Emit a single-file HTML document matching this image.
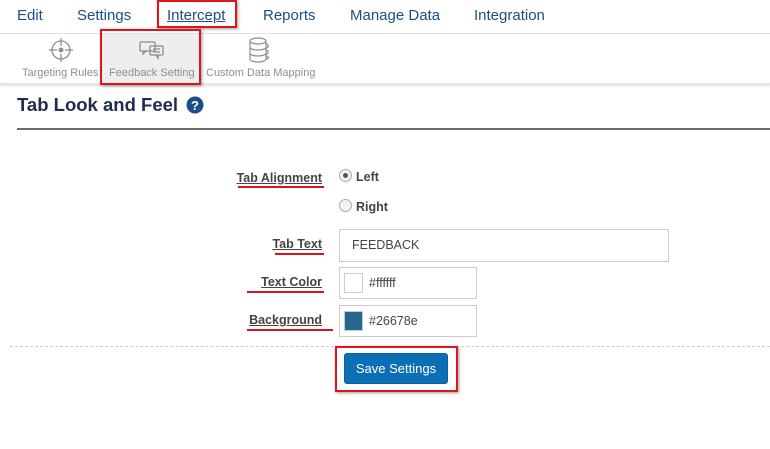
<!DOCTYPE html>
<html><head><style>
*{margin:0;padding:0;box-sizing:border-box}
body{width:770px;height:449px;background:#fff;font-family:"Liberation Sans",sans-serif;position:relative;overflow:hidden}
.a{position:absolute;white-space:nowrap}
.nav{font-size:15px;color:#1a4e86;top:7px}
.sub{font-size:11px;color:#8a8f96;top:67px}
.lbl{font-size:12.5px;font-weight:bold;color:#444;right:448px;text-align:right;text-decoration:underline}
.ru{position:absolute;height:2px;background:#d8141b}
.box{position:absolute;border:1px solid #ccc;background:#fff;font-size:12.5px;color:#444}
.red{position:absolute;border:2px solid #e0141b;box-shadow:1px 1px 3px rgba(0,0,0,.4)}
</style></head><body>
<div class="a nav" style="left:17px">Edit</div>
<div class="a nav" style="left:77px">Settings</div>
<div class="a nav" style="left:167px;text-decoration:underline">Intercept</div>
<div class="a nav" style="left:263px">Reports</div>
<div class="a nav" style="left:350px">Manage Data</div>
<div class="a nav" style="left:474px">Integration</div>
<div class="a" style="left:0;top:33px;width:770px;height:1px;background:#e2e2e2"></div>
<div class="a" style="left:101px;top:34px;width:99px;height:50px;background:#eeeeee"></div>
<div class="a" style="left:0;top:83px;width:770px;height:2px;background:#e4e4e4;box-shadow:0 1px 2px rgba(0,0,0,.15)"></div>
<svg class="a" style="left:47px;top:36px" width="28" height="28" viewBox="0 0 28 28" fill="none" stroke="#8a8f96" stroke-width="1.3"><circle cx="14" cy="14" r="9"/><path d="M14 2v8M14 18v8M2 14h8M18 14h8"/><circle cx="14" cy="14" r="1.8" fill="#8a8f96"/></svg>
<svg class="a" style="left:138px;top:39px" width="28" height="22" viewBox="0 0 28 22" fill="none" stroke="#8a8f96" stroke-width="1.3"><rect x="2" y="3" width="15" height="9" rx="1"/><path d="M5 12v3l3-3"/><rect x="12" y="7" width="13" height="9" rx="1"/><path d="M15 10h7M15 13h7M20 16v3l-2-3"/></svg>
<svg class="a" style="left:245px;top:36px" width="30" height="28" viewBox="0 0 30 28" fill="none" stroke="#8a8f96" stroke-width="1.2"><ellipse cx="13" cy="5" rx="8" ry="3"/><path d="M5 5v18c0 2 4 3 8 3s8-1 8-3V5M5 11c0 2 4 3 8 3s8-1 8-3M5 17c0 2 4 3 8 3s8-1 8-3"/><path d="M21 8c3 0 3 4 0 4M21 14c3 0 3 4 0 4M21 20c3 0 3 3 0 3"/></svg>
<div class="a sub" style="left:22px">Targeting Rules</div>
<div class="a sub" style="left:109px">Feedback Setting</div>
<div class="a sub" style="left:206px">Custom Data Mapping</div>
<div class="red" style="left:157px;top:0;width:80px;height:28px"></div>
<div class="red" style="left:100px;top:29px;width:101px;height:56px"></div>
<div class="a" style="left:17px;top:94px;font-size:18.5px;font-weight:bold;color:#1d2d4f">Tab Look and Feel</div>
<svg class="a" style="left:186px;top:96px" width="18" height="18"><circle cx="9" cy="9" r="8.5" fill="#1b4f8a"/><text x="9" y="14" fill="#fff" font-size="13" font-weight="bold" text-anchor="middle" font-family="Liberation Sans">?</text></svg>
<div class="a" style="left:17px;top:128px;width:753px;height:2px;background:#6b6b6b"></div>
<div class="a lbl" style="top:171px">Tab Alignment</div>
<div class="ru" style="left:238px;top:186px;width:86px"></div>
<div class="a lbl" style="top:237px">Tab Text</div>
<div class="ru" style="left:275px;top:253px;width:49px"></div>
<div class="a lbl" style="top:275px">Text Color</div>
<div class="ru" style="left:247px;top:291px;width:77px"></div>
<div class="a lbl" style="top:313px">Background</div>
<div class="ru" style="left:247px;top:329px;width:86px"></div>
<div class="a" style="left:339px;top:169px;width:13px;height:13px;border-radius:50%;border:1px solid #aaa;background:#f2f2f2"></div>
<div class="a" style="left:343px;top:173px;width:5px;height:5px;border-radius:50%;background:#555"></div>
<div class="a" style="left:356px;top:170px;font-size:12.5px;font-weight:bold;color:#444">Left</div>
<div class="a" style="left:339px;top:199px;width:13px;height:13px;border-radius:50%;border:1px solid #aaa;background:#f2f2f2"></div>
<div class="a" style="left:356px;top:200px;font-size:12.5px;font-weight:bold;color:#444">Right</div>
<div class="box" style="left:339px;top:229px;width:330px;height:33px;padding:8px 12px">FEEDBACK</div>
<div class="box" style="left:339px;top:267px;width:138px;height:32px"><div class="a" style="left:4px;top:5px;width:19px;height:20px;border:1px solid #ccc;background:#fff"></div><div class="a" style="left:29px;top:8px">#ffffff</div></div>
<div class="box" style="left:339px;top:305px;width:138px;height:32px"><div class="a" style="left:4px;top:5px;width:19px;height:20px;border:1px solid #ccc;background:#26678e"></div><div class="a" style="left:29px;top:8px">#26678e</div></div>
<div class="a" style="left:10px;top:346px;width:760px;border-top:1px dashed #ccc"></div>
<div class="a" style="left:344px;top:353px;width:104px;height:31px;background:#0b6fb5;border-radius:3px;border:1px solid #0a5f9c;color:#fff;font-size:13px;text-align:center;line-height:29px">Save Settings</div>
<div class="red" style="left:335px;top:346px;width:123px;height:46px"></div>
</body></html>
